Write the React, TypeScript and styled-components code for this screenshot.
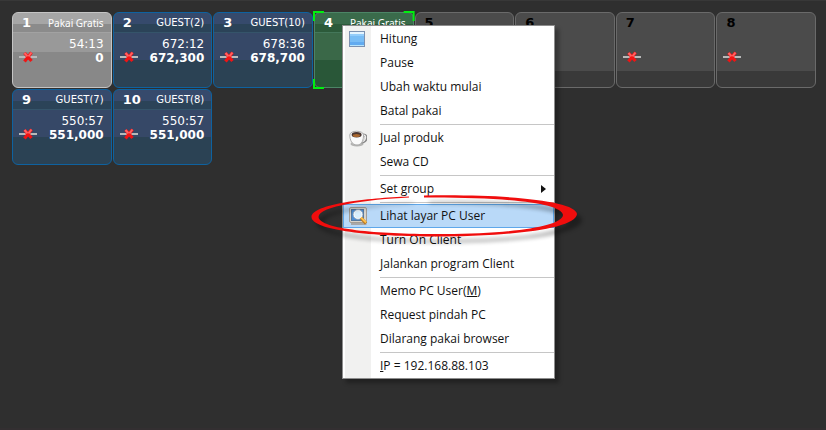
import React from "react";
import styled, { createGlobalStyle, css } from "styled-components";

const GlobalStyle = createGlobalStyle`
  html, body, #root { height: 100%; }
  body { margin: 0; background: #2f2f2f; }
  * { box-sizing: border-box; }
`;

const Desktop = styled.main`
  position: relative;
  min-height: 100%;
  padding: 11px 10px 0 12px;
  border-top: 1px solid #383838;
  border-bottom: 2px solid #332f31;
  overflow: hidden;
  font-family: "DejaVu Sans", Verdana, sans-serif;
`;

const SeatGrid = styled.section`
  display: grid;
  grid-template-columns: repeat(8, 1fr);
  gap: 1px;
`;

type Tone = "free" | "guest" | "selected" | "idle";

const tones = {
  free: css`
    color: #fff;
    border-color: #c4c4c4;
    background: linear-gradient(#a6a6a6 0 11px, #8b8b8b 11px 19px, #a2a2a2 19px 20px, #999 20px 39px, #888 39px);
  `,
  guest: css`
    color: #fff;
    border-color: #0e62a0;
    background: linear-gradient(#364a6c 0 11px, #2b4358 11px 19px, #35546a 19px 20px, #364867 20px 47px, #2b4254 47px);
  `,
  selected: css`
    color: #fff;
    border-color: #4c8566;
    background: linear-gradient(#3a6b4b 0 11px, #2c5a3a 11px 19px, #44775a 19px 20px, #3a6848 20px 47px, #295738 47px);
  `,
  idle: css`
    color: #000;
    border-color: #6a6a6a;
    background: linear-gradient(#4b4b4b 0 58px, #393939 58px);
  `,
};

const Seat = styled.article<{ $tone: Tone }>`
  position: relative;
  height: 76px;
  padding: 3px 7px 0 9px;
  border: 1px solid;
  border-radius: 6px;
  ${(p) => tones[p.$tone]}
`;

const SeatHeader = styled.header`
  display: flex;
  justify-content: space-between;
  height: 16px;
  line-height: 14px;
`;

const SeatNumber = styled.strong`
  font-size: 13px;
`;

const SeatUser = styled.span<{ $guest: boolean }>`
  font-family: ${(p) => (p.$guest ? '"DejaVu Sans"' : '"Noto Sans"')}, sans-serif;
  font-size: 10px;
  white-space: nowrap;
`;

const SeatBody = styled.div`
  display: grid;
  grid-template-columns: 18px 1fr;
  margin: 5px 0 0 -3px;
  font-size: 12px;
  line-height: 14px;
  text-align: right;
`;

const Time = styled.span`
  grid-column: 2;
  min-height: 14px;
`;

const Amount = styled.strong`
  grid-column: 2;
`;

const OfflineSvg = styled.svg`
  grid-column: 1;
  grid-row: 2;
`;

const Brackets = styled.svg`
  position: absolute;
  inset: -2px;
  width: calc(100% + 4px);
  height: calc(100% + 4px);
`;

const Menu = styled.nav`
  position: absolute;
  top: 24px;
  left: 342px;
  width: 213px;
  border: 1px solid #8d8d8d;
  padding-top: 1px;
  background: linear-gradient(90deg, #fff 0 2px, #f1f1f0 2px 28px, #fff 28px);
  box-shadow: 4px 4px 4px rgba(0, 0, 0, 0.3);
  font-family: "Open Sans", "Noto Sans", sans-serif;
`;

const MenuItem = styled.button<{ $active?: boolean }>`
  display: grid;
  grid-template-columns: 32px 1fr 8px;
  align-items: center;
  width: 100%;
  height: 24px;
  padding: 0 4px;
  border: 1px solid ${(p) => (p.$active ? "#5ea7ea" : "transparent")};
  background: ${(p) => (p.$active ? "#b9d9f8" : "transparent")};
  color: #111;
  font: inherit;
  font-size: 12px;
  line-height: 18px;
  text-align: left;
  white-space: nowrap;
`;

const Separator = styled.hr`
  height: 1px;
  margin: 1px 0 1px 37px;
  border: 0;
  background: #c6c6c6;
`;

const Slot = styled.span`
  display: flex;
  align-items: center;
  padding-left: 1px;
`;

const Ring = styled.svg`
  position: absolute;
  top: 188px;
  left: 305px;
  pointer-events: none;
`;

const Offline = () => (
  <OfflineSvg width="18" height="12" viewBox="0 1 18 12" role="img" aria-label="Offline">
    <path d="M0 7h18" stroke="#b9b9b9" strokeWidth="2" />
    <path d="M5.500 3l7 8M12.500 2.500l-7 9" stroke="#f01414" strokeWidth="3.200" />
    <path d="M5.500 3l3 3.400M12.500 2.500l-3 3.800" stroke="#ff6262" strokeWidth="2" />
  </OfflineSvg>
);

const ScreenIcon = () => (
  <svg width="16" height="16" viewBox="0 0 16 16">
    <rect x="0.5" y="0.5" width="15" height="15" fill="#e4f4ff" stroke="#7c91b0" />
    <rect x="1" y="3" width="14" height="11" fill="#79bdf5" />
    <path d="M1 4h14" stroke="#94cdfa" strokeWidth="2" />
    <path d="M1 12.5h14" stroke="#62abf0" strokeWidth="3" />
    <path d="M1 14.5h14" stroke="#b8e4fc" />
  </svg>
);

const CoffeeIcon = () => (
  <svg width="18" height="17" viewBox="0 0 18 17">
    <ellipse cx="8" cy="14" rx="6.5" ry="2.5" fill="#b4b4b2" />
    <path d="M13 5c6-1 5.500 7-1 7" fill="none" stroke="#888" strokeWidth="3" />
    <path d="M13 5c5-1 4.500 6-1 7" fill="none" stroke="#eee" strokeWidth="1.500" />
    <path d="M.8 5C.8 0 14.500 0 14.500 5c0 5-1.500 10-6.500 10S.8 10 .8 5z" fill="#fafafa" stroke="#aaa" />
    <ellipse cx="7.600" cy="4.800" rx="5" ry="2.700" fill="#4a3630" />
    <ellipse cx="7.400" cy="5.600" rx="3.600" ry="1.500" fill="#a8672f" />
  </svg>
);

const MagnifierIcon = () => (
  <svg width="19" height="18" viewBox="0 0 19 18">
    <rect x="0.500" y="0.500" width="17" height="15" rx="1.500" fill="#d8d4cc" stroke="#a29d96" />
    <path d="M2 17h15.500" stroke="#a7a8aa" strokeWidth="2" />
    <rect x="2.500" y="2.500" width="12" height="11" fill="#4e8fd6" stroke="#56799f" />
    <circle cx="9" cy="7.500" r="4.200" fill="#d9effd" stroke="#f7fbff" strokeWidth="1.500" />
    <circle cx="9" cy="7.500" r="4.900" fill="none" stroke="#7f93a8" strokeWidth="0.700" />
    <path d="M12 11l5 5.500" stroke="#b87822" strokeWidth="3.200" />
    <path d="M12 10.500l5 5" stroke="#ffc04a" strokeWidth="1.800" />
  </svg>
);

const Arrow = () => (
  <svg width="5" height="8" viewBox="0 0 5 8">
    <path d="M0 0l5 4-5 4z" fill="#111" />
  </svg>
);

interface SeatData {
  id: number;
  tone: Tone;
  user?: string;
  time?: string;
  amount?: string;
  online?: boolean;
}

const seats: SeatData[] = [
  { id: 1, tone: "free", user: "Pakai Gratis", time: "54:13", amount: "0" },
  { id: 2, tone: "guest", user: "GUEST(2)", time: "672:12", amount: "672,300" },
  { id: 3, tone: "guest", user: "GUEST(10)", time: "678:36", amount: "678,700" },
  { id: 4, tone: "selected", user: "Pakai Gratis", online: true },
  { id: 5, tone: "idle", online: true },
  { id: 6, tone: "idle", online: true },
  { id: 7, tone: "idle" },
  { id: 8, tone: "idle" },
  { id: 9, tone: "guest", user: "GUEST(7)", time: "550:57", amount: "551,000" },
  { id: 10, tone: "guest", user: "GUEST(8)", time: "550:57", amount: "551,000" },
];

interface Entry {
  label: React.ReactNode;
  icon?: React.ReactNode;
  submenu?: boolean;
  active?: boolean;
}

const groups: Entry[][] = [
  [
    { label: "Hitung", icon: <ScreenIcon /> },
    { label: "Pause" },
    { label: "Ubah waktu mulai" },
    { label: "Batal pakai" },
  ],
  [{ label: "Jual produk", icon: <CoffeeIcon /> }, { label: "Sewa CD" }],
  [{ label: "Set group", submenu: true }],
  [
    { label: "Lihat layar PC User", icon: <MagnifierIcon />, active: true },
    { label: "Turn On Client" },
    { label: "Jalankan program Client" },
  ],
  [
    { label: <>Memo PC User(<u>M</u>)</> },
    { label: "Request pindah PC" },
    { label: "Dilarang pakai browser" },
  ],
  [{ label: <><u>I</u>P = 192.168.88.103</> }],
];

const ringPath =
  "M104 7.500C62 9 7 15 6.500 28C7 42 72 48 140 47.500C205 47 271 40 272 25C271 12 205 5 119 6.500L119 8.500C200 8 257 14 258 26C257 38 204 44.500 140 45C80 45.500 15 41 13.500 28C14 17 62 10.500 104 8.500Z";

const App = () => (
  <>
    <GlobalStyle />
    <Desktop>
      <SeatGrid>
        {seats.map((s) => (
          <Seat key={s.id} $tone={s.tone}>
            <SeatHeader>
              <SeatNumber>{s.id}</SeatNumber>
              <SeatUser $guest={s.tone === "guest"}>{s.user}</SeatUser>
            </SeatHeader>
            <SeatBody>
              <Time>{s.time}</Time>
              {!s.online && <Offline />}
              <Amount>{s.amount}</Amount>
            </SeatBody>
            {s.tone === "selected" && (
              <Brackets viewBox="0 0 102 78" preserveAspectRatio="none">
                <path
                  d="M1 10V1h10M91 1h10v9M1 68v9h10M91 77h10v-9"
                  fill="none"
                  stroke="#00f010"
                  strokeWidth="2"
                />
              </Brackets>
            )}
          </Seat>
        ))}
      </SeatGrid>
      <Menu>
        {groups.map((group, g) => (
          <React.Fragment key={g}>
            {g > 0 && <Separator />}
            {group.map((item, i) => (
              <MenuItem key={i} type="button" $active={item.active}>
                <Slot>{item.icon}</Slot>
                <span>{item.label}</span>
                {item.submenu && <Arrow />}
              </MenuItem>
            ))}
          </React.Fragment>
        ))}
      </Menu>
      <Ring width="290" height="64" viewBox="0 0 290 64" aria-hidden="true">
        <defs>
          <filter id="soft" x="-10%" y="-30%" width="120%" height="160%">
            <feGaussianBlur stdDeviation="2" />
          </filter>
        </defs>
        <path d={ringPath} transform="translate(5 6)" fill="#000" opacity="0.35" filter="url(#soft)" />
        <path d={ringPath} fill="#f00d0d" />
      </Ring>
    </Desktop>
  </>
);

export default App;
